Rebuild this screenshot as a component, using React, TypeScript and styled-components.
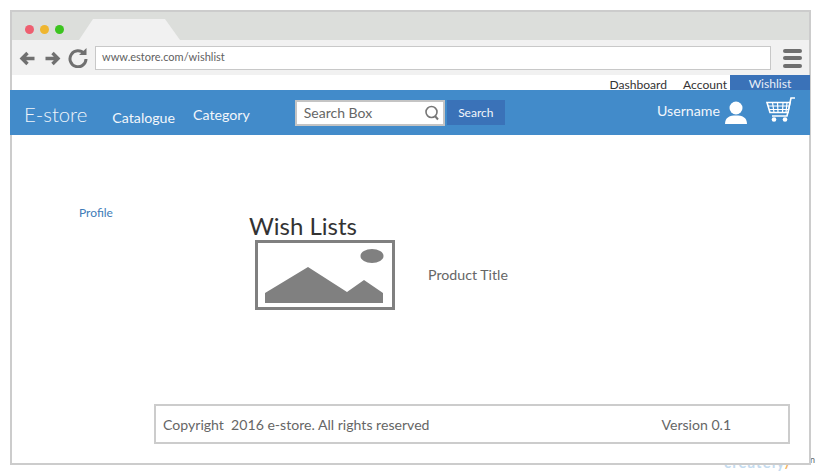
import styled, { createGlobalStyle } from "styled-components";

const GlobalStyle = createGlobalStyle`
  html, body {
    margin: 0;
    padding: 0;
    background: #fff;
    font-family: Lato, "Liberation Sans", sans-serif;
  }
  * { box-sizing: border-box; }
`

const Page = styled.div`
  position: relative;
  width: 820px;
  height: 475px;
  padding: 10px 0 0 10px;
  overflow: hidden;
`

const Watermark = styled.span`
  position: absolute;
  left: 724px;
  top: 453px;
  font-size: 15px;
  font-weight: 700;
  letter-spacing: 1px;
  color: #c4dbef;
`

const WatermarkTail = styled.span`
  color: #f5b45c;
`

const Corner = styled.span`
  position: absolute;
  left: 810px;
  top: 454px;
  font-size: 9px;
  color: #666;
`

const Window = styled.div`
  position: relative;
  width: 801px;
  height: 455px;
  border: 2px solid #cccccc;
  background: #fff;
  display: flex;
  flex-direction: column;
`

const TabStrip = styled.div`
  height: 28px;
  background: #dcdedb;
  display: flex;
  align-items: center;
  padding: 6px 0 0 13px;
  position: relative;
`

const Dot = styled.span<{ $color: string }>`
  width: 9px;
  height: 9px;
  border-radius: 50%;
  margin-right: 6px;
  background: ${(p) => p.$color};
`

const Tab = styled.svg`
  position: absolute;
  left: 67px;
  bottom: 0;
`

const Toolbar = styled.div`
  height: 35px;
  background: #f1f1f1;
  display: flex;
  align-items: center;
  padding: 1px 0 0 7px;
`

const NavIcon = styled.svg<{ $flip?: boolean; $left: number }>`
  margin-left: ${(p) => p.$left}px;
  transform: ${(p) => (p.$flip ? "scaleX(-1)" : "none")};
`

const AddressBar = styled.div`
  width: 676px;
  height: 24px;
  margin-left: 7px;
  background: #fff;
  border: 1px solid #c8c8c8;
  padding-left: 6px;
  font-size: 11px;
  line-height: 19px;
  color: #5f5f5f;
`

const Menu = styled.div`
  margin-left: 12px;
  display: flex;
  flex-direction: column;
  gap: 3.5px;
`

const MenuBar = styled.span`
  width: 19px;
  height: 4px;
  border-radius: 2px;
  background: #6f6f6f;
`

const TopLinks = styled.div`
  height: 15px;
  display: flex;
  justify-content: flex-end;
  font-size: 12.1px;
  color: #333;
`

const TopLink = styled.span<{ $gap: number }>`
  margin-right: ${(p) => p.$gap}px;
  line-height: 19px;
  height: 15px;
`

const WishTab = styled.span`
  width: 80px;
  margin-right: -1px;
  background: #3a72b8;
  color: #e8eef7;
  text-align: center;
  line-height: 17px;
  font-size: 12.1px;
  height: 15px;
`

const NavBar = styled.div`
  height: 45px;
  margin: 0 -1px 0 -2px;
  background: #428bca;
  display: flex;
  align-items: center;
  color: #f2f6fb;
`

const Brand = styled.span`
  margin-left: 14px;
  font-size: 20.3px;
  font-weight: 300;
  color: #eef4fa;
  position: relative;
  top: 1px;
`

const NavLink = styled.span<{ $left: number; $drop: number }>`
  margin-left: ${(p) => p.$left}px;
  font-size: 14.2px;
  position: relative;
  top: ${(p) => p.$drop}px;
`

const SearchBox = styled.div`
  margin-left: 45px;
  width: 150px;
  height: 26px;
  background: #fff;
  border: 2px solid #c4c4c4;
  display: flex;
  align-items: center;
  justify-content: space-between;
  padding: 0 3px 0 7px;
  font-size: 14px;
  color: #666;
`

const SearchButton = styled.span`
  margin-left: 2px;
  width: 58px;
  height: 25px;
  background: #3a72b8;
  color: #f2f6fb;
  font-size: 12px;
  line-height: 25px;
  text-align: center;
`

const UserArea = styled.div`
  margin-left: auto;
  display: flex;
  align-items: center;
  font-size: 14.2px;
`

const UserName = styled.span`
  position: relative;
  top: -2px;
`

const UserIcon = styled.svg`
  margin: 0 0 0 4px;
`

const CartIcon = styled.svg`
  margin: -6px 14px 0 18px;
`

const Body = styled.div`
  flex: 1;
  display: grid;
  grid-template-columns: 237px 1fr;
  grid-template-rows: 1fr auto;
`

const SideLink = styled.a`
  margin: 70px 0 0 67px;
  font-size: 12px;
  color: #3f7cb8;
`

const Main = styled.div`
  padding-top: 77px;
`

const Heading = styled.h1`
  margin: 0;
  font-size: 24px;
  font-weight: 400;
  line-height: 28px;
  color: #333;
`

const ProductRow = styled.div`
  margin-left: 6px;
  display: flex;
  align-items: center;
`

const ProductTitle = styled.span`
  margin: 0 0 2px 33px;
  font-size: 14.2px;
  color: #666;
`

const Footer = styled.div`
  grid-column: 1 / 3;
  margin: 0 19px 19px 142px;
  height: 40px;
  border: 2px solid #cccccc;
  display: flex;
  align-items: center;
  font-size: 14.1px;
  color: #666;
  padding: 1px 0 0 7px;
`

const Version = styled.span`
  margin-left: 232px;
`

const Arrow = ({ flip, left }: { flip?: boolean; left: number }) => (
  <NavIcon $flip={flip} $left={left} width="17" height="15" viewBox="0 0 17 15">
    <path d="M8.5 2 L3 7.5 L8.5 13 M3.5 7.5 H15.5" fill="none" stroke="#707070" strokeWidth="3.4" />
  </NavIcon>
)

const App = () => {
  return (
    <Page>
      <GlobalStyle />
      <Watermark>creately<WatermarkTail>/</WatermarkTail></Watermark>
      <Corner>n</Corner>
      <Window>
        <TabStrip>
          <Dot $color="#ee5f70" />
          <Dot $color="#efb62f" />
          <Dot $color="#3cc41f" />
          <Tab width="102" height="21" viewBox="0 0 102 21">
            <path d="M0 21 L14 0 H86 L101 21 Z" fill="#f1f1f1" />
          </Tab>
        </TabStrip>
        <Toolbar>
          <Arrow left={0} />
          <Arrow left={8} flip />
          <NavIcon $left={7} width="20" height="20" viewBox="0 0 20 20">
            <path d="M16 5.5 A8 8 0 1 0 18 11" fill="none" stroke="#707070" strokeWidth="3" />
            <path d="M11 7 H18.5 V0 Z" fill="#707070" />
          </NavIcon>
          <AddressBar>www.estore.com/wishlist</AddressBar>
          <Menu>
            <MenuBar />
            <MenuBar />
            <MenuBar />
          </Menu>
        </Toolbar>
        <TopLinks>
          <TopLink $gap={16}>Dashboard</TopLink>
          <TopLink $gap={3}>Account</TopLink>
          <WishTab>Wishlist</WishTab>
        </TopLinks>
        <NavBar>
          <Brand>E-store</Brand>
          <NavLink $left={25} $drop={5}>Catalogue</NavLink>
          <NavLink $left={18} $drop={2}>Category</NavLink>
          <SearchBox>
            Search Box
            <svg width="16" height="16" viewBox="0 0 16 16">
              <circle cx="7.5" cy="7" r="5.5" fill="none" stroke="#777" strokeWidth="1.6" />
              <path d="M11 11 L14 14.5" stroke="#777" strokeWidth="2" />
            </svg>
          </SearchBox>
          <SearchButton>Search</SearchButton>
          <UserArea>
            <UserName>Username</UserName>
            <UserIcon width="24" height="24" viewBox="0 0 24 24">
              <circle cx="12" cy="7" r="6.5" fill="#fff" />
              <path d="M1 23 C1 16 6 14.5 12 14.5 C18 14.5 23 16 23 23 Z" fill="#fff" />
            </UserIcon>
            <CartIcon width="30" height="26" viewBox="0 0 30 26">
              <path d="M29 1 H25 L21 19 H6" fill="none" stroke="#fff" strokeWidth="1.6" />
              <path d="M1 5.5 H24 L22 15.5 H4 Z" fill="#428bca" stroke="#fff" strokeWidth="1.6" />
              <path d="M2 9 H23 M3 12.5 H22.5 M6.5 5.5 L8 15.5 M11.5 5.5 L12 15.5 M17 5.5 L16.5 15.5 M21 5.5 L20 15.5" stroke="#fff" strokeWidth="1.2" />
              <circle cx="8" cy="22.5" r="2.3" fill="#fff" />
              <circle cx="19" cy="22.5" r="2.3" fill="#fff" />
            </CartIcon>
          </UserArea>
        </NavBar>
        <Body>
          <SideLink>Profile</SideLink>
          <Main>
            <Heading>Wish Lists</Heading>
            <ProductRow>
              <svg width="140" height="70" viewBox="0 0 140 70">
                <rect x="1.5" y="1.5" width="137" height="67" fill="#fff" stroke="#808080" strokeWidth="3" />
                <ellipse cx="117" cy="16" rx="11.5" ry="7" fill="#808080" />
                <path d="M10 53 L53 27 L92 52 L109 40 L128 53 V63 H10 Z" fill="#808080" />
              </svg>
              <ProductTitle>Product Title</ProductTitle>
            </ProductRow>
          </Main>
          <Footer>
            Copyright&nbsp; 2016 e-store. All rights reserved
            <Version>Version 0.1</Version>
          </Footer>
        </Body>
      </Window>
    </Page>
  )
}

export default App
